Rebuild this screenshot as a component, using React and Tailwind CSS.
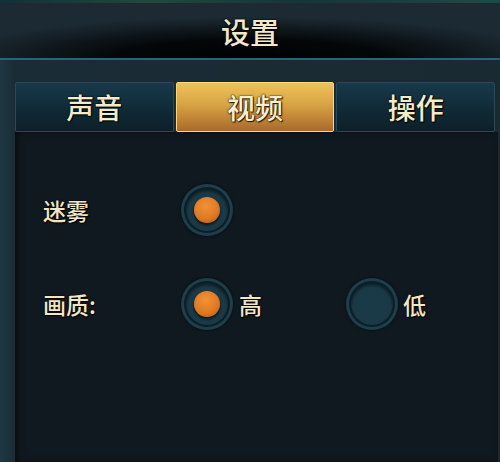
import React from 'react';

const tabs = ['声音', '视频', '操作'];

function Radio({ checked }) {
    return (
        <div className="w-[52px] h-[52px] rounded-full bg-[#1d3e4c] p-[3px] shadow-[0_0_3px_#04080a]">
            <div className="w-full h-full rounded-full bg-[#0d1d25] p-[2px]">
                <div className="w-full h-full rounded-full bg-[#1b3a47] shadow-[inset_0_2px_3px_rgba(0,0,0,0.5)] flex items-center justify-center">
                    {checked && (
                        <div className="w-[26px] h-[26px] rounded-full bg-[radial-gradient(circle_at_45%_35%,#f29236_0%,#e07a22_55%,#b9560f_100%)] shadow-[0_2px_3px_rgba(0,0,0,0.7)]" />
                    )}
                </div>
            </div>
        </div>
    );
}

export default function App() {
    const active = 1;
    const textFx = '[text-shadow:0_0_2px_#000,0_0_1px_#000,1px_1px_1px_#000]';

    return (
        <div className="w-[500px] h-[462px] flex flex-col bg-[#1b2932] overflow-hidden font-['Noto_Sans_CJK_SC',sans-serif]">
            {/* top strip from scene */}
            <div className="h-[3px] bg-[linear-gradient(90deg,#12303a,#1e4a3a_30%,#16343c_60%,#1f4a44)]" />

            {/* header */}
            <div className="h-[55px] flex items-center justify-center bg-[radial-gradient(ellipse_60%_75%_at_50%_100%,#000_0%,#040709_45%,rgba(27,41,50,0)_100%)] bg-[#1c2a33]">
                <span className={`text-[29px] font-medium leading-none text-[#f3e9c6] ${textFx} mt-[2px]`}>设置</span>
            </div>
            <div className="h-[2px] bg-[#2b6378]" />

            {/* body */}
            <div className="flex-1 flex flex-col bg-[linear-gradient(90deg,#1f3842_0px,#1a2c35_15px,#1a2a33_100%)]">
                <div className="flex gap-[2px] ml-[15px] mr-[5px] mt-[22px] h-[50px]">
                    {tabs.map((t, i) => (
                        <div
                            key={t}
                            className={
                                i === active
                                    ? 'flex-1 flex items-center justify-center rounded-[2px] border border-[#f5d97a] bg-[linear-gradient(180deg,#eec25a_0%,#d8a344_45%,#a9692b_100%)]'
                                    : 'flex-1 flex items-center justify-center rounded-[2px] border border-[#28495a] bg-[linear-gradient(180deg,#17394a_0%,#112a36_55%,#0d1f28_100%)]'
                            }
                        >
                            <span
                                className={
                                    i === active
                                        ? 'text-[28px] font-medium leading-none text-[#f7efd4] [text-shadow:0_0_2px_#2a1a08,0_0_1px_#2a1a08,1px_1px_1px_#2a1a08]'
                                        : `text-[28px] font-medium leading-none text-[#f4ebc8] ${textFx}`
                                }
                            >
                                {t}
                            </span>
                        </div>
                    ))}
                </div>

                <div className="flex-1 ml-[15px] mr-[2px] bg-[#111920] shadow-[inset_3px_0_6px_rgba(0,0,0,0.5)] pl-[28px] pt-[52px] flex flex-col gap-[42px]">
                    <div className="flex items-center h-[52px]">
                        <span className={`w-[138px] text-[23px] font-medium text-[#f1e7c4] ${textFx}`}>迷雾</span>
                        <Radio checked />
                    </div>
                    <div className="flex items-center h-[52px]">
                        <span className={`w-[138px] text-[23px] font-medium text-[#f1e7c4] ${textFx}`}>画质:</span>
                        <Radio checked />
                        <span className={`ml-[6px] text-[23px] font-medium text-[#f1e7c4] ${textFx}`}>高</span>
                        <div className="ml-[84px]">
                            <Radio />
                        </div>
                        <span className={`ml-[5px] text-[23px] font-medium text-[#f1e7c4] ${textFx}`}>低</span>
                    </div>
                </div>
            </div>
        </div>
    );
}
